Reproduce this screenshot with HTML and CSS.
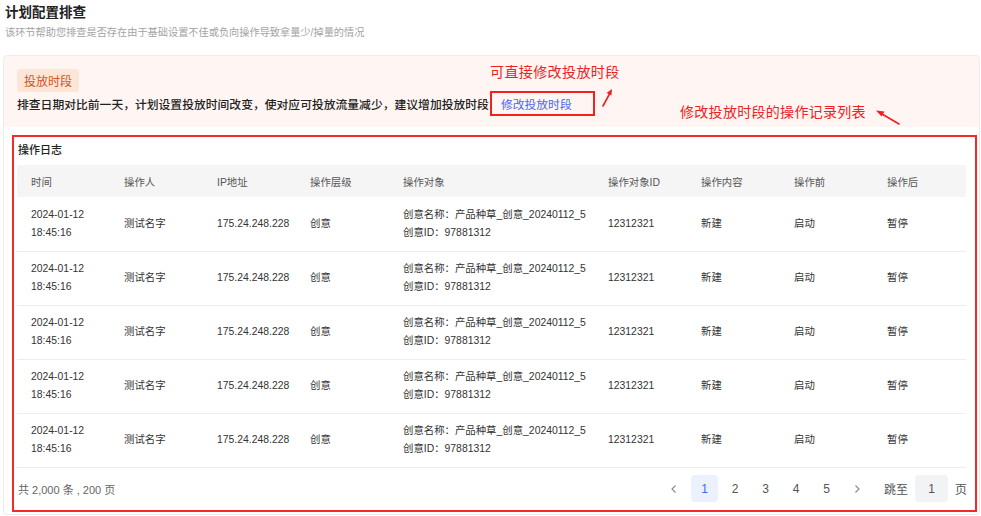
FILE: index.html
```html
<!DOCTYPE html>
<html lang="zh-CN">
<head>
<meta charset="utf-8">
<title>计划配置排查</title>
<link rel="stylesheet" href="styles.css">
</head>
<body>
<div class="page">
  <h1 class="title">计划配置排查</h1>
  <p class="subtitle">该环节帮助您排查是否存在由于基础设置不佳或负向操作导致拿量少/掉量的情况</p>
  <div class="card">
    <div class="alert">
      <span class="tag">投放时段</span>
      <div class="desc">排查日期对比前一天，计划设置投放时间改变，使对应可投放流量减少，建议增加投放时段<span class="link">修改投放时段</span></div>
      <span class="note note-1">可直接修改投放时段</span>
      <svg class="arrow arrow-1" width="14" height="22" viewBox="0 0 14 22"><path d="M2 19 L9 6" stroke="#f2201f" stroke-width="1.6" stroke-linecap="round"/><path d="M11 2 L5.6 6 L10.4 8.6 Z" fill="#f2201f"/></svg>
      <span class="note note-2">修改投放时段的操作记录列表</span>
      <svg class="arrow arrow-2" width="28" height="20" viewBox="0 0 28 20"><path d="M25 17 L8 7" stroke="#f2201f" stroke-width="1.6" stroke-linecap="round"/><path d="M2 3.5 L10.5 4.5 L7.5 9.5 Z" fill="#f2201f"/></svg>
    </div>
    <div class="log">
      <div class="log-title">操作日志</div>
      <table class="grid">
        <colgroup>
          <col class="c"><col class="c"><col class="c"><col class="c"><col class="c-wide"><col class="c"><col class="c"><col class="c"><col class="c">
        </colgroup>
        <thead>
          <tr><th>时间</th><th>操作人</th><th>IP地址</th><th>操作层级</th><th>操作对象</th><th>操作对象ID</th><th>操作内容</th><th>操作前</th><th>操作后</th></tr>
        </thead>
        <tbody>
          <tr><td>2024-01-12<br>18:45:16</td><td>测试名字</td><td>175.24.248.228</td><td>创意</td><td>创意名称：产品种草_创意_20240112_5<br>创意ID：97881312</td><td>12312321</td><td>新建</td><td>启动</td><td>暂停</td></tr>
          <tr><td>2024-01-12<br>18:45:16</td><td>测试名字</td><td>175.24.248.228</td><td>创意</td><td>创意名称：产品种草_创意_20240112_5<br>创意ID：97881312</td><td>12312321</td><td>新建</td><td>启动</td><td>暂停</td></tr>
          <tr><td>2024-01-12<br>18:45:16</td><td>测试名字</td><td>175.24.248.228</td><td>创意</td><td>创意名称：产品种草_创意_20240112_5<br>创意ID：97881312</td><td>12312321</td><td>新建</td><td>启动</td><td>暂停</td></tr>
          <tr><td>2024-01-12<br>18:45:16</td><td>测试名字</td><td>175.24.248.228</td><td>创意</td><td>创意名称：产品种草_创意_20240112_5<br>创意ID：97881312</td><td>12312321</td><td>新建</td><td>启动</td><td>暂停</td></tr>
          <tr><td>2024-01-12<br>18:45:16</td><td>测试名字</td><td>175.24.248.228</td><td>创意</td><td>创意名称：产品种草_创意_20240112_5<br>创意ID：97881312</td><td>12312321</td><td>新建</td><td>启动</td><td>暂停</td></tr>
        </tbody>
      </table>
      <div class="footer">
        <span class="total">共 2,000 条 , 200 页</span>
        <div class="pager">
          <span class="pg arrow-btn"><svg width="10" height="10" viewBox="0 0 10 10"><path d="M6.5 1.5 L3 5 L6.5 8.5" fill="none" stroke="#888" stroke-width="1.1"/></svg></span>
          <span class="pg current">1</span>
          <span class="pg">2</span>
          <span class="pg">3</span>
          <span class="pg">4</span>
          <span class="pg">5</span>
          <span class="pg arrow-btn"><svg width="10" height="10" viewBox="0 0 10 10"><path d="M3.5 1.5 L7 5 L3.5 8.5" fill="none" stroke="#888" stroke-width="1.1"/></svg></span>
          <span class="jump">跳至</span>
          <span class="jump-input">1</span>
          <span class="jump-unit">页</span>
        </div>
      </div>
    </div>
  </div>
</div>
</body>
</html>
```

FILE: styles.css
```css
* { box-sizing: border-box; }
body {
  margin: 0;
  background: #fff;
  color: #333;
  font-family: "Liberation Sans", "Noto Sans CJK SC", sans-serif;
}
.page { padding: 4px 1px 0 3px; }
.title {
  margin: 0 0 0 2px;
  font-size: 13.5px;
  line-height: 18px;
  font-weight: 600;
  color: #222;
}
.subtitle {
  margin: 4px 0 0 2px;
  font-size: 10.2px;
  line-height: 14px;
  color: #a3a3a3;
}
.card {
  margin-top: 15px;
  border: 1px solid #f0ebe9;
  border-radius: 4px;
  overflow: hidden;
  background: #fff;
  padding-bottom: 2px;
}
.alert {
  position: relative;
  background: #fff5f2;
  padding: 13px 13px 12px;
}
.tag {
  display: inline-flex;
  align-items: center;
  height: 23px;
  padding: 0 7px;
  border-radius: 3px;
  background: #fde5d8;
  color: #d4541c;
  font-size: 12px;
}
.desc {
  margin-top: 3px;
  font-size: 11.8px;
  line-height: 20px;
  font-weight: 500;
  color: #222;
}
.link {
  position: relative;
  margin-left: 12px;
  color: #4468f2;
  font-weight: 400;
}
.link::after {
  content: "";
  position: absolute;
  left: -11px;
  right: -23px;
  top: -7px;
  bottom: -4px;
  border: 2px solid #ef2222;
}
.note {
  position: absolute;
  font-size: 14px;
  line-height: 18px;
  color: #f2201f;
  white-space: nowrap;
}
.note-1 { left: 486px; top: 7px; letter-spacing: 0.4px; }
.note-2 { left: 676px; top: 47px; letter-spacing: 0.3px; }
.arrow { position: absolute; }
.arrow-1 { left: 597px; top: 31px; }
.arrow-2 { left: 870px; top: 51px; }
.log {
  margin: 8px 2px 0 8px;
  border: 2px solid #f22a2a;
  padding: 5px 8px 0 3px;
}
.log-title {
  padding-left: 1px;
  font-size: 11px;
  line-height: 16px;
  font-weight: 500;
  color: #222;
  margin-bottom: 7px;
}
.grid {
  width: 949px;
  table-layout: fixed;
  border-collapse: collapse;
  font-size: 10.4px;
}
.grid col.c { width: 93px; }
.grid col.c-wide { width: 205px; }
.grid th {
  height: 32px;
  padding: 0 0 0 14px;
  background: #f5f5f5;
  text-align: left;
  font-weight: 400;
  color: #555;
}
.grid td {
  height: 54px;
  padding: 0 0 0 14px;
  border-bottom: 1px solid #ededed;
  line-height: 18px;
  color: #333;
  vertical-align: middle;
  white-space: nowrap;
}
.footer {
  display: flex;
  align-items: center;
  justify-content: space-between;
  height: 42px;
  padding-left: 1px;
}
.total { font-size: 11px; color: #666; }
.pager {
  display: flex;
  align-items: center;
  gap: 3.5px;
  font-size: 12px;
  color: #555;
}
.pg {
  width: 27px;
  height: 27px;
  display: flex;
  align-items: center;
  justify-content: center;
  border-radius: 4px;
}
.pg.current { background: #ebf1ff; color: #3e6bf5; }
.jump { margin-left: 10px; }
.jump-input {
  width: 33px;
  height: 27px;
  margin: 0 3.5px;
  display: flex;
  align-items: center;
  justify-content: center;
  background: #f2f3f5;
  border-radius: 4px;
}
```
